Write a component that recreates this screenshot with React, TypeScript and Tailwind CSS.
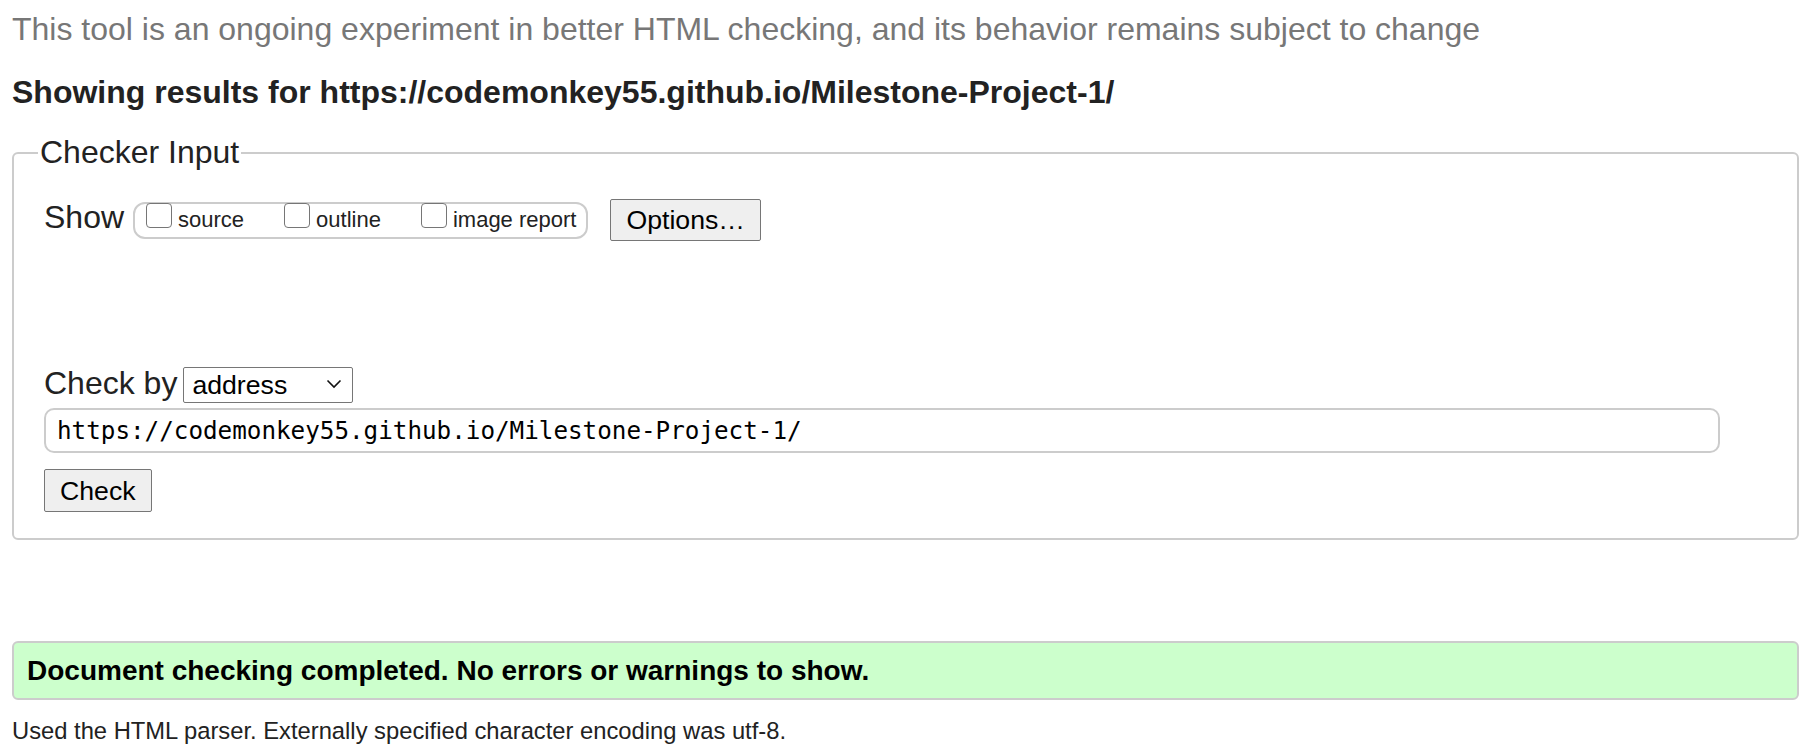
import React from "react";

const showOptions = ["source", "outline", "image report"];

const checkedUrl = "https://codemonkey55.github.io/Milestone-Project-1/";

const Checkbox: React.FC<{ label: string }> = ({ label }) => {
  return (
    <label className="flex items-start gap-[6px]">
      <input
        type="checkbox"
        className="-mt-[1px] h-[25px] w-[26px] appearance-none rounded-[4px] border border-[#767676] bg-white"
      />
      <span className="mt-[5px] text-[22px] leading-[22px] text-[#222]">
        {label}
      </span>
    </label>
  );
};

const App: React.FC = () => {
  return (
    <div className="min-h-screen bg-white pl-[12px] pr-[15px] pt-[11px] font-['Liberation_Sans',Arial,sans-serif] text-[#222]">
      <p className="text-[32px] leading-[37px] text-[#777]">
        This tool is an ongoing experiment in better HTML checking, and its
        behavior remains subject to change
      </p>
      <h2 className="mt-[26px] text-[32px] font-bold leading-[37px] text-[#222]">
        Showing results for {checkedUrl}
      </h2>

      <fieldset className="mt-[23px] rounded-[6px] border-2 border-[#ccc] pl-[30px] pr-[31px] pt-[28px] pb-[26px]">
        <legend className="-ml-[6px] px-[2px] text-[32px] leading-[37px]">
          Checker Input
        </legend>

        <div className="flex items-start">
          <span className="text-[32px] leading-[36px]">Show</span>
          <div className="ml-[9px] mt-[3px] flex h-[37px] items-start gap-[40px] rounded-[12px] border-2 border-[#ccc] pl-[11px] pr-[10px]">
            {showOptions.map((opt) => (
              <Checkbox key={opt} label={opt} />
            ))}
          </div>
          <button className="ml-[22px] h-[42px] rounded-[2px] border border-[#767676] bg-[#efefef] px-[15px] text-[26.67px] leading-[30px] text-black">
            Options…
          </button>
        </div>

        <div className="mt-[126px] flex items-start">
          <span className="-mt-[2px] text-[32px] leading-[36px]">Check by</span>
          <div className="relative ml-[6px]">
            <select className="h-[36px] w-[170px] appearance-none rounded-[2px] border border-[#767676] bg-white pl-[8px] text-[26.67px] leading-[30px] text-black">
              <option>address</option>
            </select>
            <svg
              className="pointer-events-none absolute right-[11px] top-[12px] h-[10px] w-[16px]"
              viewBox="0 0 16 10"
              fill="none"
            >
              <path d="M1.5 1.5 L8 8 L14.5 1.5" stroke="#111" strokeWidth="1.6" />
            </svg>
          </div>
        </div>

        <input
          readOnly
          value={checkedUrl}
          className="mt-[5px] block h-[45px] w-[1676px] rounded-[10px] border-2 border-[#ccc] pl-[11px] font-['DejaVu_Sans_Mono',monospace] text-[24.25px] text-black outline-none"
        />

        <button className="mt-[16px] block h-[43px] rounded-[2px] border border-[#767676] bg-[#efefef] px-[15px] text-[26.67px] leading-[30px] text-black">
          Check
        </button>
      </fieldset>

      <div className="mt-[101px] flex h-[59px] items-center rounded-[6px] border-2 border-[#ccc] bg-[#ccffcc] pl-[13px]">
        <span className="text-[28px] font-bold leading-[32px] text-black">
          Document checking completed. No errors or warnings to show.
        </span>
      </div>

      <p className="mt-[17px] text-[23.75px] leading-[28px] text-[#222]">
        Used the HTML parser. Externally specified character encoding was utf-8.
      </p>
    </div>
  );
};

export default App;
